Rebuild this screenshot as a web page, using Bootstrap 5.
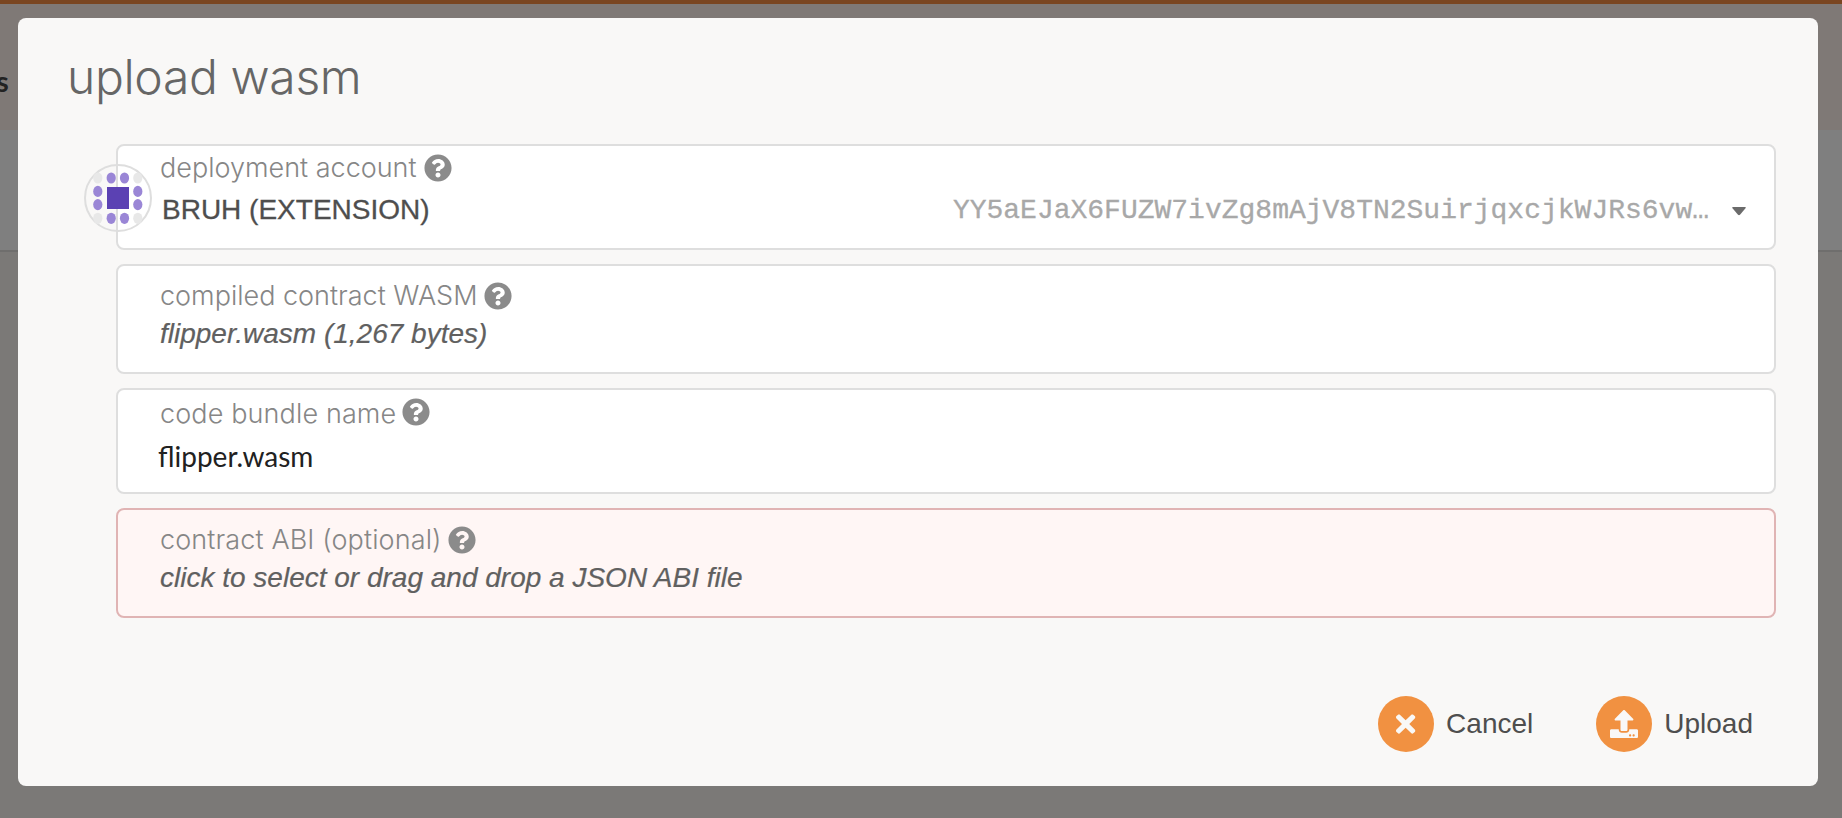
<!DOCTYPE html>
<html lang="en">
<head>
<meta charset="utf-8">
<title>upload wasm</title>
<link href="https://cdn.jsdelivr.net/npm/bootstrap@5.3.0/dist/css/bootstrap.min.css" rel="stylesheet">
<style>
  body{height:818px;overflow:hidden;background:#7b7977;font-family:"Liberation Sans",Arial,sans-serif;font-size:28px;line-height:38px;color:#4e4e4e}
  .page-top{height:130px;background:#7f7976;border-top:4px solid #7a4621}
  .page-tabs{height:122px;background:#7f7f7f;border-bottom:2px solid #6f6e6d}
  .tab-end{font:700 29px/38px Lato,sans-serif;color:#222;margin-left:-4px;padding-top:58px}
  .dialog-box{left:18px;top:18px;width:1800px;height:768px;background:#f9f8f7;border-radius:8px;padding:27px 42px 34px 50px}
  h1{font:300 48px/64px Inter,sans-serif;color:#666;margin:0 0 35px -1px;letter-spacing:-.35px}
  .fields{margin-left:48px;gap:14px}
  .field{border:2px solid #dedede;border-radius:8px;background:#fff;padding:3px 28px 0 42px}
  .f-tall{height:110px;padding-top:11px}
  .f-short{height:106px}
  .f-name{padding-top:5px}
  .f-warn{background:#fff6f5;border-color:#e0b4b4}
  .lbl{font-family:Inter,sans-serif;font-weight:300;font-size:27px;color:#868686;height:38px}
  .lbl svg{width:28px;height:28px;fill:#8b8b8b;margin-left:7px}
  .lbl-name{letter-spacing:.12px}
  .lbl-name svg{margin-left:6px}
  .file-txt{font-style:italic;color:#606060;-webkit-text-stroke:.2px #606060}
  .acct{margin-left:2px;-webkit-text-stroke:.3px #4e4e4e}
  .lato-txt{font-family:Lato,sans-serif;color:#212121;margin:4px 0 0 -2px}
  .addr{font-family:"Liberation Mono","Courier New",monospace;color:#a8a8a8;padding-top:1px;margin:0 23px -1px auto;-webkit-text-stroke:.3px #a8a8a8}
  .caret-ico{margin-top:3px}
  .avatar{left:-34px;top:18px;width:68px;height:68px}
  .acts{gap:63px;margin-right:23px}
  .acts>div{gap:12px}
  .round-ico{width:56px;height:56px;background:#f19141}
  .round-ico svg{height:28px;fill:#f9f8f7}
</style>
<script src="https://cdn.jsdelivr.net/npm/bootstrap@5.3.0/dist/js/bootstrap.bundle.min.js"></script>
</head>
<body class="position-relative">
<svg class="d-none"><symbol id="help" viewBox="0 0 512 512"><path d="M504 256c0 136.997-111.043 248-248 248S8 392.997 8 256C8 119.083 119.043 8 256 8s248 111.083 248 248zM262.655 90c-54.497 0-89.255 22.957-116.549 63.758-3.536 5.286-2.353 12.415 2.715 16.258l34.699 26.31c5.205 3.947 12.621 3.008 16.665-2.122 17.864-22.658 30.113-35.797 57.303-35.797 20.429 0 45.698 13.148 45.698 32.958 0 14.976-12.363 22.667-32.534 33.976C247.128 238.528 216 254.941 216 296v4c0 6.627 5.373 12 12 12h56c6.627 0 12-5.373 12-12v-1.333c0-28.462 83.186-29.647 83.186-106.667 0-58.002-60.165-102-116.531-102zM256 338c-25.365 0-46 20.635-46 46 0 25.364 20.635 46 46 46s46-20.636 46-46c0-25.365-20.635-46-46-46z"/></symbol></svg>
<div class="page-top"><div class="tab-end">s</div></div>
<div class="page-tabs"></div>

<div class="dialog-box position-absolute d-flex flex-column">
  <h1>upload wasm</h1>
  <div class="fields d-flex flex-column">
    <div class="field f-short position-relative">
      <svg class="avatar position-absolute" viewBox="0 0 68 68">
        <circle cx="34" cy="34" r="33" fill="none" stroke="#dedede" stroke-width="2"/>
        <g fill="#e8e8e8"><ellipse cx="13.8" cy="14" rx="4.6" ry="5.6"/><ellipse cx="53.8" cy="14" rx="4.6" ry="5.6"/><ellipse cx="13.8" cy="54.3" rx="4.6" ry="5.6"/><ellipse cx="53.8" cy="54.3" rx="4.6" ry="5.6"/></g>
        <g fill="#9a86d6"><ellipse cx="27.2" cy="14" rx="4.6" ry="5.6"/><ellipse cx="40.5" cy="14" rx="4.6" ry="5.6"/><ellipse cx="13.8" cy="27.4" rx="4.6" ry="5.6"/><ellipse cx="53.8" cy="27.4" rx="4.6" ry="5.6"/><ellipse cx="13.8" cy="40.6" rx="4.6" ry="5.6"/><ellipse cx="53.8" cy="40.6" rx="4.6" ry="5.6"/><ellipse cx="27.2" cy="54.3" rx="4.6" ry="5.6"/><ellipse cx="40.5" cy="54.3" rx="4.6" ry="5.6"/></g>
        <path fill="#5b41b3" d="M23 23h22v22H23z"/>
      </svg>
      <div class="lbl d-flex align-items-center"><span>deployment account</span><svg><use href="#help"/></svg></div>
      <div class="d-flex align-items-center mt-1">
        <span class="acct">BRUH (EXTENSION)</span>
        <span class="addr">YY5aEJaX6FUZW7ivZg8mAjV8TN2SuirjqxcjkWJRs6vw…</span>
        <svg class="caret-ico" width="14" height="9" viewBox="0 0 14 9"><path fill="#6b6b6b" d="M1 0h12q1.300 .3.500 1.300L8 7.800q-1 .9-2 0L.5 1.300Q-.3.300 1 0z"/></svg>
      </div>
    </div>
    <div class="field f-tall">
      <div class="lbl d-flex align-items-center"><span>compiled contract WASM</span><svg><use href="#help"/></svg></div>
      <div class="file-txt">flipper.wasm (1,267 bytes)</div>
    </div>
    <div class="field f-short f-name">
      <div class="lbl lbl-name d-flex align-items-center"><span>code bundle name</span><svg class="mb-1"><use href="#help"/></svg></div>
      <div class="lato-txt">flipper.wasm</div>
    </div>
    <div class="field f-tall f-warn">
      <div class="lbl lbl-name d-flex align-items-center"><span>contract ABI (optional)</span><svg><use href="#help"/></svg></div>
      <div class="file-txt">click to select or drag and drop a JSON ABI file</div>
    </div>
  </div>
  <div class="d-flex justify-content-end mt-auto acts">
    <div class="d-flex align-items-center"><span class="round-ico rounded-circle d-flex align-items-center justify-content-center"><svg viewBox="0 0 352 512"><path d="M242.720 256l100.070-100.070c12.280-12.280 12.280-32.190 0-44.480l-22.240-22.240c-12.280-12.280-32.190-12.280-44.480 0L176 189.280 75.930 89.210c-12.280-12.280-32.190-12.280-44.480 0L9.210 111.450c-12.280 12.280-12.280 32.190 0 44.480L109.280 256 9.210 356.070c-12.280 12.280-12.280 32.190 0 44.480l22.240 22.240c12.280 12.280 32.200 12.280 44.480 0L176 322.720l100.070 100.070c12.280 12.280 32.200 12.280 44.480 0l22.240-22.240c12.280-12.280 12.280-32.190 0-44.480L242.720 256z"/></svg></span><span>Cancel</span></div>
    <div class="d-flex align-items-center"><span class="round-ico rounded-circle d-flex align-items-center justify-content-center"><svg viewBox="0 0 512 512"><path d="M296 384h-80c-13.300 0-24-10.700-24-24V192h-87.700c-17.800 0-26.700-21.500-14.100-34.100L242.300 5.700c7.500-7.500 19.800-7.500 27.300 0l152.200 152.200c12.600 12.600 3.700 34.100-14.100 34.100H320v168c0 13.300-10.700 24-24 24zm216-8v112c0 13.300-10.700 24-24 24H24c-13.300 0-24-10.700-24-24V376c0-13.300 10.700-24 24-24h136v8c0 30.900 25.100 56 56 56h80c30.900 0 56-25.100 56-56v-8h136c13.300 0 24 10.700 24 24zm-124 88c0-11-9-20-20-20s-20 9-20 20 9 20 20 20 20-9 20-20zm64 0c0-11-9-20-20-20s-20 9-20 20 9 20 20 20 20-9 20-20z"/></svg></span><span>Upload</span></div>
  </div>
</div>
</body>
</html>
